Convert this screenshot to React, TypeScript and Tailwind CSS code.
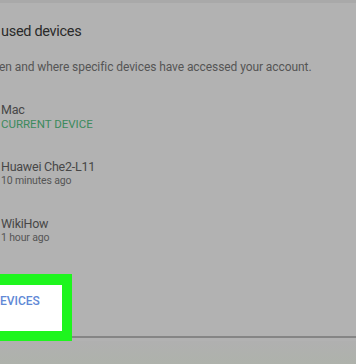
import React from "react";

// ── Device Row ───────────────────────────────────────────────────────────────
function DeviceRow({
  name,
  detail,
  current = false,
}: {
  name: string;
  detail: string;
  current?: boolean;
}) {
  return (
    <div className="flex flex-col">
      <p className="text-[12.5px] leading-[15px] tracking-[-0.25px] text-[#474747]">{name}</p>
      <p
        className={
          current
            ? "text-[11.5px] leading-[14px] text-[#3b8a5c]"
            : "text-[10.5px] leading-[14px] tracking-[-0.15px] text-[#555555]"
        }
      >
        {detail}
      </p>
    </div>
  );
}

export default function App() {
  return (
    <div
      className="w-[356px] h-[364px] overflow-hidden bg-[#b2b2b2] flex flex-col"
      style={{ fontFamily: "Roboto, 'Liberation Sans', sans-serif" }}
    >
      <div className="h-[3px] bg-[#a9a9a9]" />
      <div className="flex-1 flex flex-col">
        <h2 className="mt-[19px] ml-[1px] text-[14.5px] leading-[20px] tracking-[-0.3px] text-[#2a2a2a] whitespace-nowrap">
          used devices
        </h2>
        <p className="mt-[17px] ml-[-1px] text-[12px] leading-[16px] tracking-[-0.08px] text-[#555555] whitespace-nowrap">
          en and where specific devices have accessed your account.
        </p>

        <div className="mt-[27px] ml-[1px] flex flex-col gap-[28px]">
          <DeviceRow name="Mac" detail="CURRENT DEVICE" current />
          <DeviceRow name="Huawei Che2-L11" detail="10 minutes ago" />
          <DeviceRow name="WikiHow" detail="1 hour ago" />
        </div>

        <div className="mt-[29px] flex items-end">
          <div className="w-[72px] h-[67px] border-t-[11px] border-b-[10px] border-r-[10px] border-[#1ef51e] bg-white flex items-start pt-[9px]">
            <span className="text-[12px] leading-[14px] font-medium text-[#6189d6]">
              EVICES
            </span>
          </div>
          <div className="flex-1 h-[2px] mb-[3px] bg-[#858585]" />
        </div>
        <div className="flex-1 bg-gradient-to-b from-[#b0b0b0] to-[#aeb2ab]" />
      </div>
    </div>
  );
}
